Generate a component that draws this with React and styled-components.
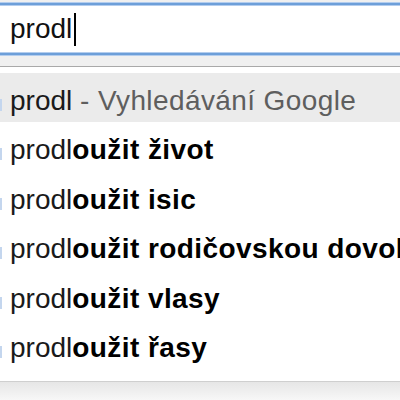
import React from "react";
import styled, { createGlobalStyle } from "styled-components";

const Global = createGlobalStyle`
  html, body { margin: 0; padding: 0; background: #ffffff; }
  body { font-family: "Liberation Sans", Arial, Helvetica, sans-serif; width: 400px; height: 400px; overflow: hidden; }
  #root { width: 400px; height: 400px; display: flex; flex-direction: column; }
`;

const Toolbar = styled.div`
  background: #f0f0f0;
  padding: 3px 0 11px;
  border-bottom: 1px solid #a9a9a9;
`;

const Field = styled.div`
  height: 48px;
  display: flex;
  align-items: center;
  padding-left: 10px;
  background: #ffffff;
  border-top: 2px solid #6d9fd9;
  border-bottom: 2px solid #6d9fd9;
  box-shadow: 0 -1px 0 #b3cdee, 0 1px 0 #b3cdee, inset 0 1px 0 #b3cdee, inset 0 -1px 0 #b3cdee;
  font-size: 28px;
  line-height: 48px;
  color: #111111;
`;

const Caret = styled.span`
  display: inline-block;
  width: 2px;
  height: 33px;
  background: #000000;
  margin-left: 2px;
  margin-top: 1px;
`;

const List = styled.div`
  flex: 1;
  display: flex;
  flex-direction: column;
  padding: 6px 0 11px;
  background: #ffffff;
  border-bottom: 1px solid #cfcfcf;
  overflow: hidden;
`;

const Row = styled.div`
  height: 49.4px;
  box-sizing: border-box;
  padding-top: 6px;
  line-height: 44px;
  display: flex;
  align-items: flex-start;
  font-size: 28px;
  white-space: nowrap;
  color: #1a1a1a;
  background: ${(p) => (p.$active ? "#ebebeb" : "#ffffff")};
`;

const Edge = styled.span`
  flex: none;
  width: 2px;
  height: 12px;
  margin-top: 20px;
  margin-right: 8px;
  background: #c4d6ee;
`;

const Bold = styled.b`
  font-weight: 700;
  color: #000000;
  letter-spacing: 0.42px;
`;

const Hint = styled.span`
  color: #5e5e5e;
  letter-spacing: 0.4px;
`;

const Footer = styled.div`
  height: 18px;
  flex: none;
  background: linear-gradient(#e6e6e6, #f7f7f7);
`;

const suggestions = [
  "život",
  "isic",
  "rodičovskou dovolenou",
  "vlasy",
  "řasy",
];

export default function App() {
  return (
    <>
      <Global />
      <Toolbar>
        <Field>
          prodl
          <Caret />
        </Field>
      </Toolbar>
      <List>
        <Row $active>
          <Edge />
          <span>
            prodl <Hint>- Vyhledávání Google</Hint>
          </span>
        </Row>
        {suggestions.map((s) => (
          <Row key={s}>
            <Edge />
            <span>
              prodl<Bold>oužit {s}</Bold>
            </span>
          </Row>
        ))}
      </List>
      <Footer />
    </>
  );
}
